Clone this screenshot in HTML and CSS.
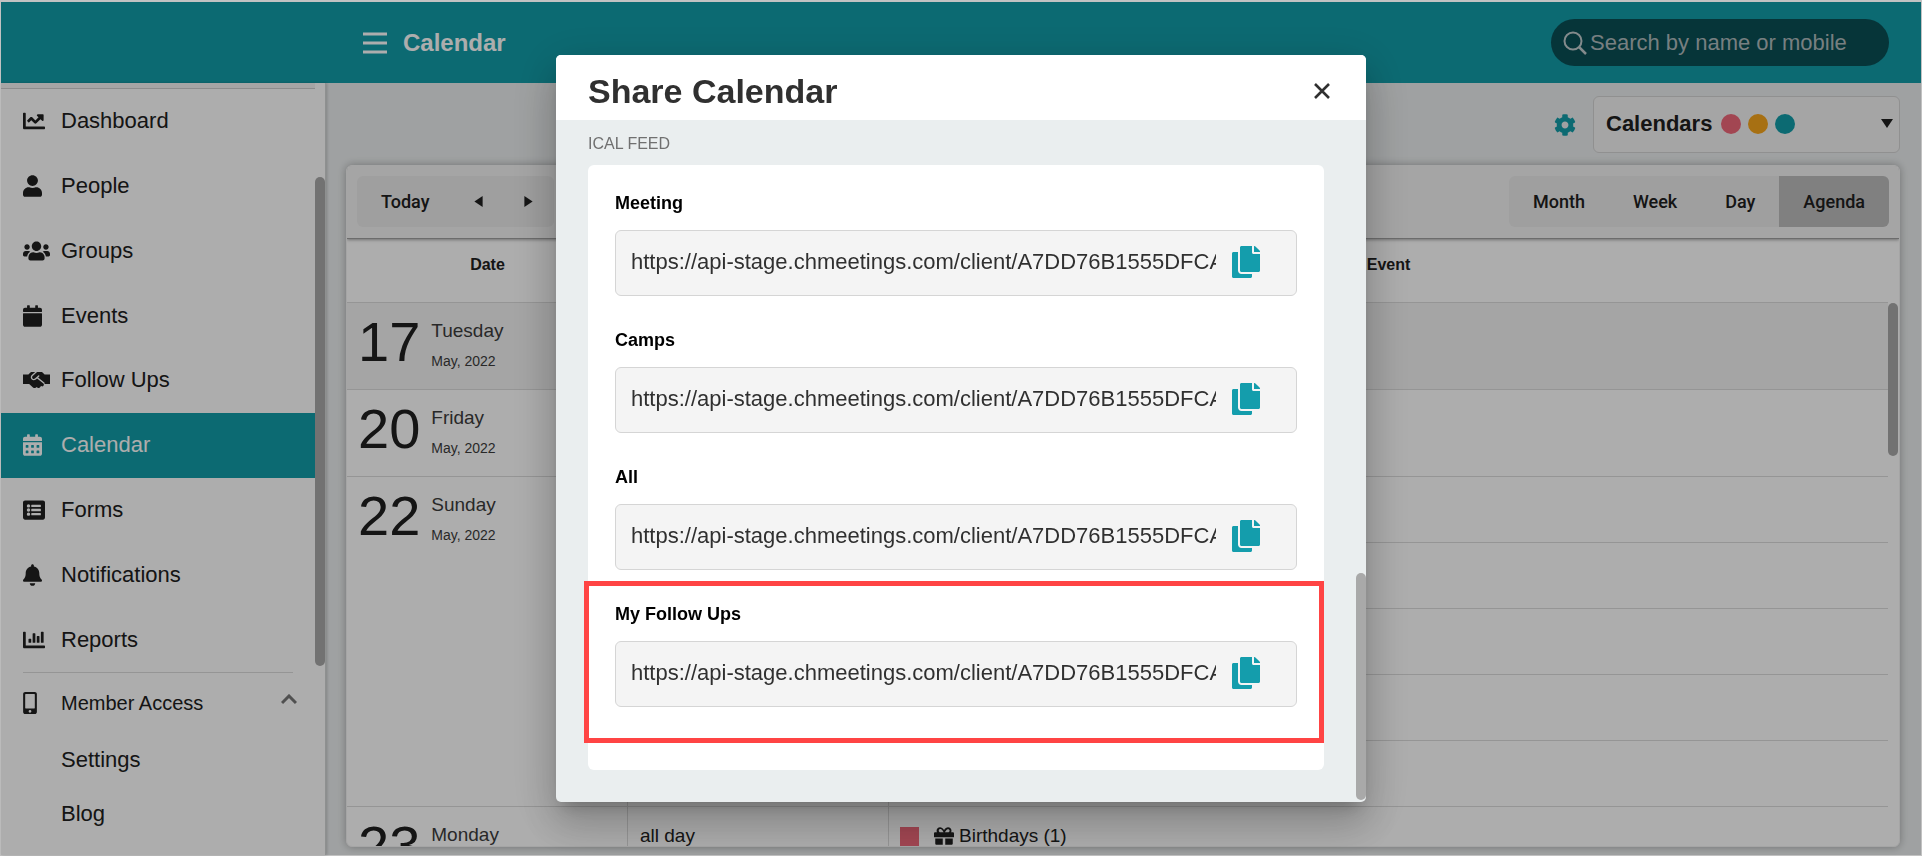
FILE: index.html
```html
<!DOCTYPE html>
<html lang="en">
<head>
<meta charset="utf-8">
<meta name="viewport" content="width=device-width, initial-scale=1">
<title>Calendar</title>
<link rel="stylesheet" href="styles.css">
</head>
<body>
<svg class="sprite" aria-hidden="true">
  <symbol id="i-line" viewBox="0 0 512 512"><path d="M496 384H64V80c0-8.84-7.16-16-16-16H16C7.16 64 0 71.16 0 80v336c0 17.67 14.33 32 32 32h464c8.84 0 16-7.16 16-16v-32c0-8.84-7.16-16-16-16zM464 96H345.94c-21.38 0-32.09 25.85-16.97 40.97l32.4 32.4L288 242.75l-73.37-73.37c-12.5-12.5-32.76-12.5-45.25 0l-68.69 68.69c-6.25 6.25-6.25 16.38 0 22.63l22.62 22.62c6.25 6.25 16.38 6.25 22.63 0L192 237.25l73.37 73.37c12.5 12.5 32.76 12.5 45.25 0l96-96 32.4 32.4c15.12 15.12 40.97 4.41 40.97-16.97V112c.01-8.84-7.15-16-16-16z"/></symbol>
  <symbol id="i-user" viewBox="0 0 448 512"><path d="M224 256c70.7 0 128-57.3 128-128S294.7 0 224 0 96 57.3 96 128s57.3 128 128 128zm89.6 32h-16.7c-22.2 10.2-46.9 16-72.9 16s-50.6-5.8-72.9-16h-16.7C60.2 288 0 348.2 0 422.4V464c0 26.5 21.5 48 48 48h352c26.5 0 48-21.5 48-48v-41.6c0-74.2-60.2-134.4-134.4-134.4z"/></symbol>
  <symbol id="i-users" viewBox="0 0 640 512"><path d="M96 224c35.3 0 64-28.7 64-64s-28.7-64-64-64-64 28.7-64 64 28.7 64 64 64zm448 0c35.3 0 64-28.7 64-64s-28.7-64-64-64-64 28.7-64 64 28.7 64 64 64zm32 32h-64c-17.6 0-33.5 7.1-45.1 18.6 40.3 22.1 68.9 62 75.1 109.4h66c17.7 0 32-14.3 32-32v-32c0-35.3-28.7-64-64-64zm-256 0c61.9 0 112-50.1 112-112S381.9 32 320 32 208 82.1 208 144s50.1 112 112 112zm76.8 32h-8.3c-20.8 10-43.9 16-68.5 16s-47.6-6-68.5-16h-8.3C179.6 288 128 339.6 128 403.2V432c0 26.5 21.5 48 48 48h288c26.5 0 48-21.5 48-48v-28.8c0-63.6-51.6-115.2-115.2-115.2zm-223.7-13.4C161.5 263.1 145.6 256 128 256H64c-35.3 0-64 28.7-64 64v32c0 17.7 14.3 32 32 32h65.9c6.3-47.4 34.9-87.3 75.2-109.4z"/></symbol>
  <symbol id="i-event" viewBox="0 0 448 512"><path d="M12 192h424c6.6 0 12 5.4 12 12v260c0 26.5-21.5 48-48 48H48c-26.5 0-48-21.5-48-48V204c0-6.6 5.4-12 12-12zm436-44v-36c0-26.5-21.5-48-48-48h-48V12c0-6.6-5.4-12-12-12h-40c-6.6 0-12 5.4-12 12v52H160V12c0-6.6-5.4-12-12-12h-40c-6.6 0-12 5.4-12 12v52H48C21.5 64 0 85.5 0 112v36c0 6.6 5.4 12 12 12h424c6.6 0 12-5.4 12-12z"/></symbol>
  <symbol id="i-hands" viewBox="0 0 640 512"><path d="M434.7 64h-85.9c-8 0-15.7 3-21.6 8.4l-98.3 90c-.1.1-.2.3-.3.4-16.6 15.6-16.3 40.5-2.1 56 12.7 13.9 39.4 17.6 56.1 2.7.1-.1.3-.1.4-.2l79.9-73.2c6.5-5.9 16.7-5.5 22.6 1 6 6.500 5.500 16.600-1 22.600l-26.100 23.900L504 313.800c2.900 2.400 5.500 5 7.900 7.700V352H640V128H512l-54.600-54.600c-5.900-6-14.100-9.400-22.700-9.400zM0 352h146.300l90.500 81.900c27.400 22.300 67.700 18.100 90-9.300l.2-.2 17.900 15.500c15.900 13 39.400 10.500 52.300-5.400l31.400-38.600 5.400 4.400c13.700 11.100 33.900 9.100 45-4.700l9.500-11.700c11.200-13.800 9.100-33.900-4.600-45.100L334.600 217.500l-30 27.500c-29.700 27.100-75.200 24.500-101.700-4.400-26.900-29.400-24.800-74.900 4.400-101.700L289.100 64h-83.800c-8.500 0-16.600 3.400-22.600 9.400L128 128H0z"/></symbol>
  <symbol id="i-cal" viewBox="0 0 448 512"><path fill-rule="evenodd" d="M0 464c0 26.5 21.5 48 48 48h352c26.5 0 48-21.5 48-48V192H0zM320 268q0-12 12-12h40q12 0 12 12v40q0 12-12 12h-40q-12 0-12-12zM320 396q0-12 12-12h40q12 0 12 12v40q0 12-12 12h-40q-12 0-12-12zM192 268q0-12 12-12h40q12 0 12 12v40q0 12-12 12h-40q-12 0-12-12zM192 396q0-12 12-12h40q12 0 12 12v40q0 12-12 12h-40q-12 0-12-12zM64 268q0-12 12-12h40q12 0 12 12v40q0 12-12 12H76q-12 0-12-12zM64 396q0-12 12-12h40q12 0 12 12v40q0 12-12 12H76q-12 0-12-12zM400 64h-48V16c0-8.800-7.200-16-16-16h-32c-8.800 0-16 7.200-16 16v48H160V16c0-8.800-7.200-16-16-16h-32c-8.800 0-16 7.200-16 16v48H48C21.500 64 0 85.500 0 112v48h448v-48c0-26.500-21.500-48-48-48z"/></symbol>
  <symbol id="i-list" viewBox="0 0 512 512"><path fill-rule="evenodd" d="M464 480H48c-26.500 0-48-21.500-48-48V80c0-26.500 21.500-48 48-48h416c26.500 0 48 21.500 48 48v352c0 26.500-21.500 48-48 48zM128 120a40 40 0 1 0 0 80 40 40 0 0 0 0-80zm0 96a40 40 0 1 0 0 80 40 40 0 0 0 0-80zm0 96a40 40 0 1 0 0 80 40 40 0 0 0 0-80zM192 144v32q0 12 12 12h200q12 0 12-12v-32q0-12-12-12H204q-12 0-12 12zm0 96v32q0 12 12 12h200q12 0 12-12v-32q0-12-12-12H204q-12 0-12 12zm0 96v32q0 12 12 12h200q12 0 12-12v-32q0-12-12-12H204q-12 0-12 12z"/></symbol>
  <symbol id="i-bell" viewBox="0 0 448 512"><path d="M224 512c35.32 0 63.97-28.65 63.97-64H160.03c0 35.35 28.65 64 63.97 64zm215.39-149.71c-19.32-20.76-55.47-51.99-55.47-154.29 0-77.7-54.48-139.9-127.94-155.16V32c0-17.67-14.32-32-31.98-32s-31.98 14.33-31.98 32v20.84C118.56 68.1 64.08 130.3 64.08 208c0 102.3-36.15 133.53-55.47 154.29-6 6.45-8.66 14.16-8.61 21.71.11 16.4 12.98 32 32.1 32h383.8c19.12 0 32-15.6 32.1-32 .05-7.55-2.61-15.27-8.61-21.71z"/></symbol>
  <symbol id="i-bars" viewBox="0 0 512 512"><path d="M332.8 320h38.4c6.4 0 12.8-6.4 12.8-12.8V172.8c0-6.4-6.4-12.8-12.8-12.8h-38.4c-6.4 0-12.8 6.4-12.8 12.8v134.4c0 6.4 6.4 12.8 12.8 12.8zm96 0h38.4c6.4 0 12.8-6.4 12.8-12.8V76.8c0-6.4-6.4-12.8-12.8-12.8h-38.4c-6.4 0-12.8 6.4-12.8 12.8v230.4c0 6.4 6.4 12.8 12.8 12.8zm-288 0h38.4c6.4 0 12.8-6.4 12.8-12.8v-70.4c0-6.4-6.4-12.8-12.8-12.8h-38.4c-6.4 0-12.8 6.4-12.8 12.8v70.4c0 6.4 6.4 12.8 12.8 12.8zm96 0h38.4c6.4 0 12.8-6.4 12.8-12.8V108.8c0-6.4-6.4-12.8-12.8-12.8h-38.4c-6.4 0-12.8 6.4-12.8 12.8v198.4c0 6.4 6.4 12.8 12.8 12.8zM496 384H64V80c0-8.84-7.16-16-16-16H16C7.16 64 0 71.16 0 80v336c0 17.67 14.33 32 32 32h464c8.84 0 16-7.16 16-16v-32c0-8.84-7.16-16-16-16z"/></symbol>
  <symbol id="i-phone" viewBox="0 0 320 512"><path d="M272 0H48C21.5 0 0 21.5 0 48v416c0 26.500 21.500 48 48 48h224c26.500 0 48-21.500 48-48V48c0-26.500-21.500-48-48-48zM160 480c-17.700 0-32-14.300-32-32s14.300-32 32-32 32 14.300 32 32-14.300 32-32 32zm112-108c0 6.600-5.400 12-12 12H60c-6.600 0-12-5.400-12-12V60c0-6.600 5.400-12 12-12h200c6.600 0 12 5.400 12 12v312z"/></symbol>
  <symbol id="i-cog" viewBox="0 0 512 512"><path d="M487.4 315.7l-42.6-24.6c4.3-23.2 4.3-47 0-70.2l42.6-24.6c4.9-2.8 7.1-8.6 5.5-14-11.1-35.6-30-67.8-54.7-94.6-3.8-4.1-10-5.1-14.8-2.3L380.8 110c-17.9-15.4-38.5-27.3-60.8-35.1V25.8c0-5.6-3.9-10.5-9.4-11.7-36.7-8.2-74.3-7.8-109.2 0-5.5 1.2-9.4 6.1-9.4 11.7V75c-22.2 7.9-42.8 19.8-60.8 35.1L88.7 85.5c-4.9-2.8-11-1.9-14.8 2.3-24.7 26.7-43.6 58.9-54.7 94.6-1.7 5.4.6 11.2 5.5 14L67.3 221c-4.3 23.2-4.3 47 0 70.2l-42.6 24.6c-4.9 2.8-7.1 8.6-5.5 14 11.1 35.6 30 67.8 54.7 94.6 3.8 4.1 10 5.1 14.8 2.3l42.6-24.6c17.9 15.4 38.5 27.3 60.8 35.1v49.2c0 5.6 3.9 10.5 9.4 11.7 36.7 8.2 74.3 7.8 109.2 0 5.5-1.2 9.4-6.1 9.4-11.7v-49.2c22.2-7.9 42.8-19.8 60.8-35.1l42.6 24.6c4.9 2.8 11 1.9 14.8-2.3 24.7-26.7 43.6-58.9 54.7-94.6 1.5-5.5-.7-11.3-5.6-14.1zM256 336c-44.1 0-80-35.9-80-80s35.9-80 80-80 80 35.9 80 80-35.9 80-80 80z"/></symbol>
  <symbol id="i-copy" viewBox="0 0 448 512"><path d="M320 448v40c0 13.255-10.745 24-24 24H24c-13.255 0-24-10.745-24-24V120c0-13.255 10.745-24 24-24h72v296c0 30.879 25.121 56 56 56h168zm0-344V0H152c-13.255 0-24 10.745-24 24v368c0 13.255 10.745 24 24 24h272c13.255 0 24-10.745 24-24V128H344c-13.2 0-24-10.8-24-24zm120.971-31.029L375.029 7.029A24 24 0 0 0 358.059 0H352v96h96v-6.059a24 24 0 0 0-7.029-16.97z"/></symbol>
  <symbol id="i-gift" viewBox="0 0 512 512"><path d="M32 448c0 17.7 14.3 32 32 32h160V320H32v128zm256 32h160c17.7 0 32-14.3 32-32V320H288v160zm192-320h-42.1c6.2-12.1 10.1-25.5 10.1-40 0-48.5-39.5-88-88-88-41.6 0-68.5 21.3-103 68.3-34.5-47-61.4-68.3-103-68.3-48.5 0-88 39.5-88 88 0 14.5 3.8 27.9 10.1 40H32c-17.7 0-32 14.3-32 32v80c0 8.8 7.2 16 16 16h480c8.8 0 16-7.2 16-16v-80c0-17.7-14.3-32-32-32zm-318-.1c-22.100 0-40-17.900-40-40s17.900-40 40-40c19.900 0 34.600 3.300 86.100 80H162zm198 .1h-86.1c51.400-76.500 65.700-80 86.100-80 22.100 0 40 17.900 40 40s-17.900 40-40 40z"/></symbol>
</svg>

<div class="app">
  <header class="topbar">
    <button class="icon-button" type="button" aria-label="Toggle menu">
      <svg width="24" height="22" viewBox="0 0 24 22"><path d="M0 2h24M0 11h24M0 20h24" stroke="currentColor" stroke-width="3"/></svg>
    </button>
    <h1 class="page-title">Calendar</h1>
    <label class="search">
      <svg width="24" height="24" viewBox="0 0 24 24" aria-hidden="true"><circle cx="10" cy="10" r="8.500" fill="none" stroke="currentColor" stroke-width="2"/><path d="M16 16l7 7" stroke="currentColor" stroke-width="2.500"/></svg>
      <input type="search" placeholder="Search by name or mobile" aria-label="Search by name or mobile">
    </label>
  </header>

  <div class="shell">
    <aside class="sidebar">
      <div class="sidebar-edge"></div>
      <nav class="nav">
        <div class="nav-list">
          <a class="nav-item" href="#"><svg width="22" height="22"><use href="#i-line"/></svg>Dashboard</a>
          <a class="nav-item" href="#"><svg width="19" height="22"><use href="#i-user"/></svg>People</a>
          <a class="nav-item" href="#"><svg width="27" height="22"><use href="#i-users"/></svg>Groups</a>
          <a class="nav-item" href="#"><svg width="19" height="22"><use href="#i-event"/></svg>Events</a>
          <a class="nav-item" href="#"><svg width="27" height="22"><use href="#i-hands"/></svg>Follow Ups</a>
          <a class="nav-item active" href="#" aria-current="page"><svg width="19" height="22"><use href="#i-cal"/></svg>Calendar</a>
          <a class="nav-item" href="#"><svg width="22" height="22"><use href="#i-list"/></svg>Forms</a>
          <a class="nav-item" href="#"><svg width="19" height="22"><use href="#i-bell"/></svg>Notifications</a>
          <a class="nav-item" href="#"><svg width="22" height="22"><use href="#i-bars"/></svg>Reports</a>
        </div>
        <hr class="nav-rule">
        <button class="nav-item nav-group" type="button" aria-expanded="true">
          <svg width="14" height="22"><use href="#i-phone"/></svg>Member Access
          <svg class="chevron" width="16" height="18" viewBox="0 0 16 18"><path d="M1 9l7-7 7 7" fill="none" stroke="currentColor" stroke-width="3"/></svg>
        </button>
        <a class="nav-sub" href="#">Settings</a>
        <a class="nav-sub" href="#">Blog</a>
      </nav>
      <div class="thumb sidebar-thumb"></div>
    </aside>

    <main class="main">
      <div class="actions">
        <button class="icon-button gear" type="button" aria-label="Calendar settings"><svg width="22" height="22"><use href="#i-cog"/></svg></button>
        <button class="calendars" type="button" aria-haspopup="listbox">
          <span>Calendars</span>
          <span class="dots"><i class="dot pink"></i><i class="dot amber"></i><i class="dot teal"></i></span>
          <svg class="caret" width="12" height="9" viewBox="0 0 12 9"><path d="M0 0h12L6 9z"/></svg>
        </button>
      </div>

      <section class="panel">
        <div class="toolbar">
          <div class="button-group">
            <button type="button">Today</button>
            <button class="step" type="button" aria-label="Previous"><svg width="9" height="11" viewBox="0 0 9 12"><path d="M9 0v12L0 6z"/></svg></button>
            <button class="step" type="button" aria-label="Next"><svg width="9" height="11" viewBox="0 0 9 12"><path d="M0 0v12l9-6z"/></svg></button>
          </div>
          <div class="button-group">
            <button type="button">Month</button>
            <button type="button">Week</button>
            <button type="button">Day</button>
            <button class="selected" type="button" aria-pressed="true">Agenda</button>
          </div>
        </div>
        <div class="agenda-wrap">
          <table class="agenda">
            <colgroup><col class="col-date"><col class="col-time"><col></colgroup>
            <thead><tr><th>Date</th><th></th><th>Event</th></tr></thead>
            <tbody>
              <tr class="tall today">
                <td><div class="date"><strong>17</strong><div><span class="weekday">Tuesday</span><span class="month">May, 2022</span></div></div></td><td></td><td></td>
              </tr>
              <tr class="tall">
                <td><div class="date"><strong>20</strong><div><span class="weekday">Friday</span><span class="month">May, 2022</span></div></div></td><td></td><td></td>
              </tr>
              <tr>
                <td rowspan="5"><div class="date"><strong>22</strong><div><span class="weekday">Sunday</span><span class="month">May, 2022</span></div></div></td><td></td><td></td>
              </tr>
              <tr><td></td><td></td></tr>
              <tr><td></td><td></td></tr>
              <tr><td></td><td></td></tr>
              <tr><td></td><td></td></tr>
              <tr class="tall">
                <td><div class="date"><strong>23</strong><div><span class="weekday">Monday</span></div></div></td>
                <td><div class="time">all day</div></td>
                <td><div class="event"><i class="swatch"></i><svg width="20" height="20"><use href="#i-gift"/></svg><span>Birthdays (1)</span></div></td>
              </tr>
            </tbody>
          </table>
          <div class="track"><div class="thumb table-thumb"></div></div>
        </div>
      </section>
    </main>
  </div>
</div>

<div class="backdrop">
  <section class="modal" role="dialog" aria-modal="true" aria-labelledby="share-title">
    <header class="modal-head">
      <h2 id="share-title">Share Calendar</h2>
      <button class="icon-button" type="button" aria-label="Close"><svg width="16" height="16" viewBox="0 0 16 16"><path d="M1 1l14 14M15 1L1 15" stroke="currentColor" stroke-width="2.600"/></svg></button>
    </header>
    <div class="modal-body">
      <h3 class="section-label">ICAL FEED</h3>
      <div class="feeds">
        <div class="feed">
          <label for="feed-meeting">Meeting</label>
          <div class="feed-box"><input id="feed-meeting" type="text" readonly value="https://api-stage.chmeetings.com/client/A7DD76B1555DFCAC"><button class="icon-button copy" type="button" aria-label="Copy Meeting link"><svg width="28" height="32"><use href="#i-copy"/></svg></button></div>
        </div>
        <div class="feed">
          <label for="feed-camps">Camps</label>
          <div class="feed-box"><input id="feed-camps" type="text" readonly value="https://api-stage.chmeetings.com/client/A7DD76B1555DFCAC"><button class="icon-button copy" type="button" aria-label="Copy Camps link"><svg width="28" height="32"><use href="#i-copy"/></svg></button></div>
        </div>
        <div class="feed">
          <label for="feed-all">All</label>
          <div class="feed-box"><input id="feed-all" type="text" readonly value="https://api-stage.chmeetings.com/client/A7DD76B1555DFCAC"><button class="icon-button copy" type="button" aria-label="Copy All link"><svg width="28" height="32"><use href="#i-copy"/></svg></button></div>
        </div>
        <div class="feed highlighted">
          <label for="feed-follow">My Follow Ups</label>
          <div class="feed-box"><input id="feed-follow" type="text" readonly value="https://api-stage.chmeetings.com/client/A7DD76B1555DFCAC"><button class="icon-button copy" type="button" aria-label="Copy My Follow Ups link"><svg width="28" height="32"><use href="#i-copy"/></svg></button></div>
        </div>
      </div>
    </div>
    <div class="thumb modal-thumb"></div>
  </section>
</div>
</body>
</html>
```
FILE: styles.css
```css
:root {
  --teal: #139da9;
  --line: #dcdcdc;
  --ink: #202020;
}

* { box-sizing: border-box; }

body {
  margin: 0;
  padding: 2px 1px 1px;
  height: 100vh;
  overflow: hidden;
  background: #c2c2c2;
  color: var(--ink);
  font-family: "Liberation Sans", Arial, sans-serif;
  font-size: 22px;
}

.sprite { position: absolute; width: 0; height: 0; }
svg { display: block; flex: none; fill: currentColor; }
h1, h2, h3 { margin: 0; }
a { color: inherit; text-decoration: none; }
button, input { font: inherit; color: inherit; }

.icon-button {
  display: flex;
  padding: 0;
  border: 0;
  background: none;
}

.app {
  display: flex;
  flex-direction: column;
  height: 100%;
  background: #ebeeef;
}

.topbar {
  display: flex;
  align-items: center;
  gap: 16px;
  flex: none;
  height: 81px;
  padding: 0 32px 0 362px;
  background: var(--teal);
  color: #fff;
}

.page-title { font-size: 24px; line-height: 28px; }

.search {
  display: flex;
  align-items: center;
  gap: 3px;
  width: 338px;
  height: 47px;
  margin-left: auto;
  padding: 0 12px;
  border-radius: 24px;
  background: #0a4e55;
  color: #c2cdce;
}

.search input {
  flex: 1;
  min-width: 0;
  padding: 0;
  border: 0;
  outline: 0;
  background: none;
}
.search input::placeholder { color: #b0bcbe; opacity: 1; }

.shell { display: flex; flex: 1; min-height: 0; }

.thumb { border-radius: 5px; background: #a9a9a9; }

.sidebar {
  position: relative;
  flex: none;
  width: 325px;
  overflow: hidden;
  border-right: 1px solid #d2d4d4;
  background: #fff;
  box-shadow: 1px 0 3px rgba(0, 0, 0, .2);
}

.sidebar-edge {
  height: 6px;
  margin-right: 10px;
  border-bottom: 1px solid #cfcfcf;
  background: #f4f4f4;
}

.nav { margin-right: 10px; }
.nav-list { display: grid; grid-auto-rows: 1fr; height: 583px; }

.nav-item {
  display: grid;
  grid-template-columns: 38px 1fr auto;
  align-items: center;
  width: 100%;
  padding: 0 18px 0 22px;
  border: 0;
  background: none;
  text-align: left;
}

.nav-item.active { background: var(--teal); color: #fff; }
.nav-rule { height: 1px; margin: 0 22px; border: 0; background: #dcdcdc; }
.nav-group { height: 60px; font-size: 20px; }
.chevron { color: #777; }
.nav-sub { display: flex; align-items: center; height: 54px; padding-left: 60px; }

.sidebar-thumb {
  position: absolute;
  top: 94px;
  right: 0;
  width: 10px;
  height: 489px;
}

.main {
  display: flex;
  flex-direction: column;
  flex: 1;
  min-width: 0;
  padding: 13px 21px 8px 20px;
}

.actions { display: flex; justify-content: flex-end; align-items: center; gap: 17px; }
.gear { color: var(--teal); }

.calendars {
  display: flex;
  align-items: center;
  width: 307px;
  height: 57px;
  padding: 0 6px 2px 12px;
  border: 1px solid #d4d4d4;
  border-radius: 6px;
  background: #f4f4f4;
  font-weight: bold;
}

.dots { display: flex; gap: 7px; margin-left: 9px; }
.dot { width: 20px; height: 20px; border-radius: 50%; }
.pink { background: #ef687a; }
.amber { background: #f7a51c; }
.teal { background: var(--teal); }
.caret { margin-left: auto; }

.panel {
  display: flex;
  flex-direction: column;
  flex: 1;
  min-height: 0;
  margin-top: 12px;
  overflow: hidden;
  border: 1px solid #f4f4f4;
  border-radius: 6px;
  background: #fff;
  box-shadow: 0 0 8px rgba(0, 0, 0, .3);
}

.toolbar {
  position: relative;
  display: flex;
  justify-content: space-between;
  flex: none;
  padding: 10px 10px 11px;
  border-bottom: 1px solid #a0a0a0;
  background: #f4f4f4;
  box-shadow: 0 1px 3px rgba(0, 0, 0, .35);
}

.button-group {
  display: flex;
  overflow: hidden;
  border-radius: 6px;
  background: #eaeaea;
}

.button-group button {
  display: flex;
  align-items: center;
  justify-content: center;
  height: 51px;
  padding: 0 24px;
  border: 0;
  background: none;
  font-family: Roboto, sans-serif;
  font-size: 18px;
  font-weight: 500;
}
.button-group .step { width: 50px; padding: 0; }
.button-group .selected { background: #bdbdbd; }

.agenda-wrap { display: flex; flex: 1; min-height: 0; overflow: hidden; }

.agenda {
  flex: 1;
  height: max-content;
  border-collapse: separate;
  border-spacing: 0;
  table-layout: fixed;
}
.col-date { width: 281px; }
.col-time { width: 261px; }

.agenda th {
  height: 64px;
  padding: 17px 0 0;
  border-bottom: 1px solid var(--line);
  font-size: 16px;
  line-height: 18px;
  vertical-align: top;
}

.agenda td {
  height: 66px;
  padding: 0;
  border-right: 1px solid var(--line);
  border-bottom: 1px solid var(--line);
  vertical-align: top;
}
.agenda td:last-child { border-right: 0; }
.agenda .tall td { height: 87px; }
.agenda .today td { background: #f3f3f3; }

.date { display: flex; gap: 11px; padding-left: 11px; color: #3c3c3c; }
.date strong { padding-top: 7px; color: var(--ink); font-size: 56px; font-weight: normal; line-height: 64px; }
.weekday { display: block; padding-top: 17px; font-size: 19px; line-height: 22px; }
.month { display: block; padding-top: 10px; font-size: 14px; line-height: 18px; }
.time { padding: 18px 12px; font-size: 19px; line-height: 22px; }
.event { display: flex; align-items: center; gap: 5px; padding: 18px 11px; font-size: 19px; line-height: 22px; }
.swatch { width: 19px; height: 19px; margin-right: 10px; background: #ef687a; }

.track { flex: none; width: 11px; padding: 64px 1px 0 0; }
.table-thumb { height: 153px; }

.backdrop {
  position: fixed;
  inset: 2px 1px 1px;
  display: flex;
  align-items: center;
  justify-content: center;
  background: rgba(0, 0, 0, .32);
}

.modal {
  position: relative;
  width: 810px;
  max-width: 100%;
  border-radius: 5px;
  background: #eaeeef;
  box-shadow: 0 11px 15px -7px rgba(0, 0, 0, .2), 0 24px 38px 3px rgba(0, 0, 0, .14), 0 9px 46px 8px rgba(0, 0, 0, .12);
}

.modal-head {
  display: flex;
  align-items: center;
  justify-content: space-between;
  height: 65px;
  padding: 6px 36px 0 32px;
  border-radius: 5px 5px 0 0;
  background: #fff;
  color: #303030;
}
.modal-head h2 { font-size: 34px; line-height: 40px; }

.modal-body { padding: 14px 42px 32px 32px; }
.section-label { color: #707070; font-size: 16px; font-weight: normal; line-height: 20px; }

.feeds {
  display: grid;
  gap: 33px;
  margin-top: 11px;
  padding: 27px 27px 63px;
  border-radius: 6px;
  background: #fff;
}

.feed { position: relative; display: grid; gap: 16px; }
.feed label { color: #000; font-size: 18px; font-weight: bold; line-height: 22px; }

.feed-box {
  display: flex;
  align-items: center;
  gap: 16px;
  height: 66px;
  padding: 0 36px 2px 15px;
  border: 1px solid #d5d5d5;
  border-radius: 6px;
  background: #f4f4f4;
}
.feed-box input {
  flex: 1;
  min-width: 0;
  padding: 0;
  border: 0;
  outline: 0;
  background: none;
  color: #303030;
}
.copy { color: #149dac; }

.highlighted::after {
  content: "";
  position: absolute;
  inset: -22px -27px -36px -31px;
  border: 5px solid #ff4444;
  pointer-events: none;
}

.modal-thumb {
  position: absolute;
  right: 0;
  bottom: 2px;
  width: 10px;
  height: 227px;
}
```
